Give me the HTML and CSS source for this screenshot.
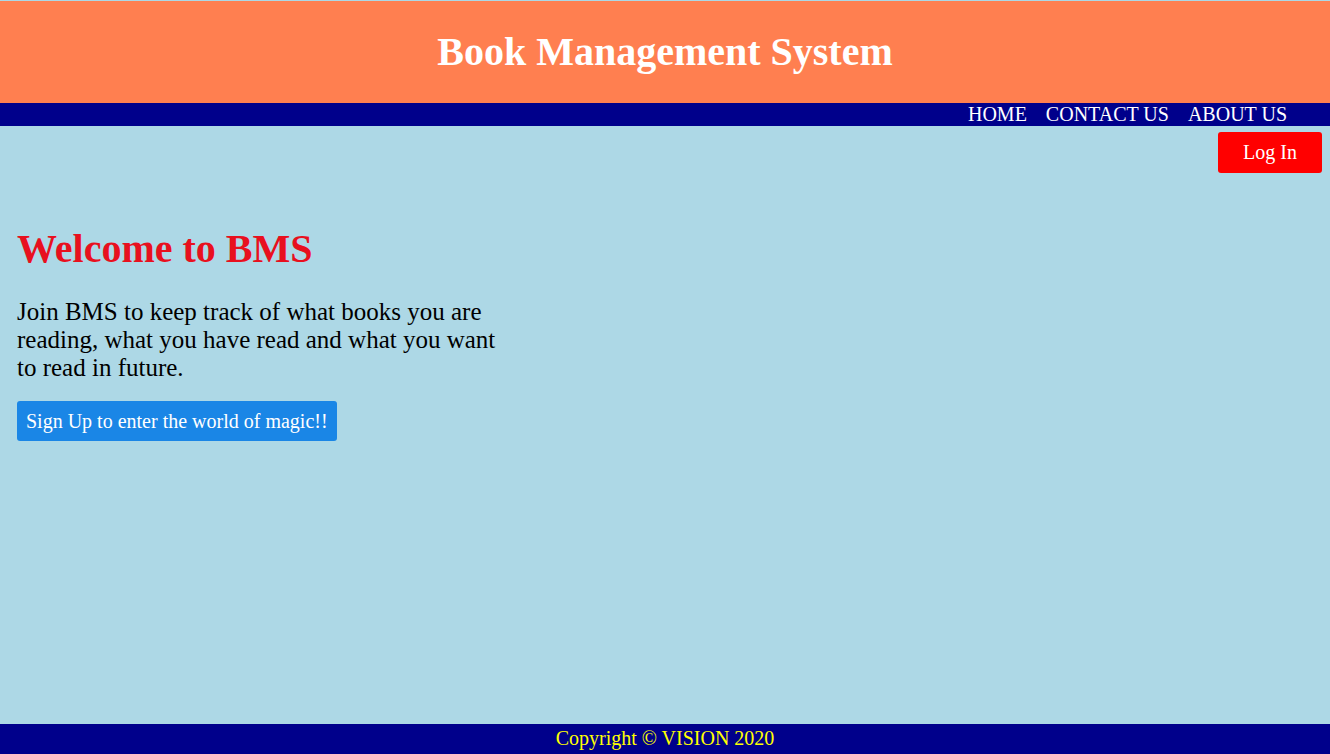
FILE: index.html
```html
<!DOCTYPE html>
<html lang="en">
<head>
<meta charset="utf-8">
<title>Book Management System</title>
<link rel="stylesheet" href="styles.css">
</head>
<body>
<header class="site-header">
  <h1 class="site-title">Book Management System</h1>
</header>
<nav class="site-nav">
  <a class="nav-link" href="#">HOME</a>
  <a class="nav-link" href="#">CONTACT US</a>
  <a class="nav-link" href="#">ABOUT US</a>
</nav>
<main class="main">
  <div class="login-row">
    <button class="btn btn-login" type="button">Log In</button>
  </div>
  <section class="welcome">
    <h2 class="welcome-title">Welcome to BMS</h2>
    <p class="welcome-text">Join BMS to keep track of what books you are reading, what you have read and what you want to read in future.</p>
    <button class="btn btn-signup" type="button">Sign Up to enter the world of magic!!</button>
  </section>
</main>
<footer class="site-footer">Copyright © VISION 2020</footer>
</body>
</html>
```

FILE: styles.css
```css
html, body {
  height: 100%;
}
body {
  margin: 0;
  padding-top: 1px;
  box-sizing: border-box;
  background: #add8e6;
  font-family: "Liberation Serif", "Times New Roman", serif;
  display: flex;
  flex-direction: column;
}
.site-header {
  background: #ff7f50;
  height: 102px;
  display: flex;
  align-items: center;
  justify-content: center;
}
.site-title {
  margin: 0;
  color: #fff;
  font-size: 40px;
  font-weight: bold;
  line-height: 46px;
}
.site-nav {
  background: #00008b;
  height: 23px;
  display: flex;
  justify-content: flex-end;
  align-items: center;
  gap: 19px;
  padding-right: 43px;
}
.nav-link {
  color: #fff;
  text-decoration: none;
  font-size: 20px;
  line-height: 23px;
}
.main {
  flex: 1;
}
.login-row {
  display: flex;
  justify-content: flex-end;
  padding: 6px 8px 0 0;
}
.btn {
  border: none;
  border-radius: 3px;
  color: #fff;
  font-family: "Liberation Serif", "Times New Roman", serif;
  font-size: 20px;
  cursor: pointer;
}
.btn-login {
  background: #ff0000;
  width: 104px;
  height: 41px;
  padding: 0;
}
.welcome {
  padding-left: 17px;
  width: 490px;
}
.welcome-title {
  margin: 53px 0 0;
  color: #e8101e;
  font-size: 40px;
  font-weight: bold;
  line-height: 46px;
}
.welcome-text {
  margin: 26px 0 19px;
  font-size: 25px;
  line-height: 28px;
  color: #000;
}
.btn-signup {
  background: #1a86e6;
  height: 40px;
  padding: 0 9px;
}
.site-footer {
  background: #00008b;
  color: #ffff00;
  height: 30px;
  font-size: 20px;
  line-height: 28px;
  text-align: center;
}
```
